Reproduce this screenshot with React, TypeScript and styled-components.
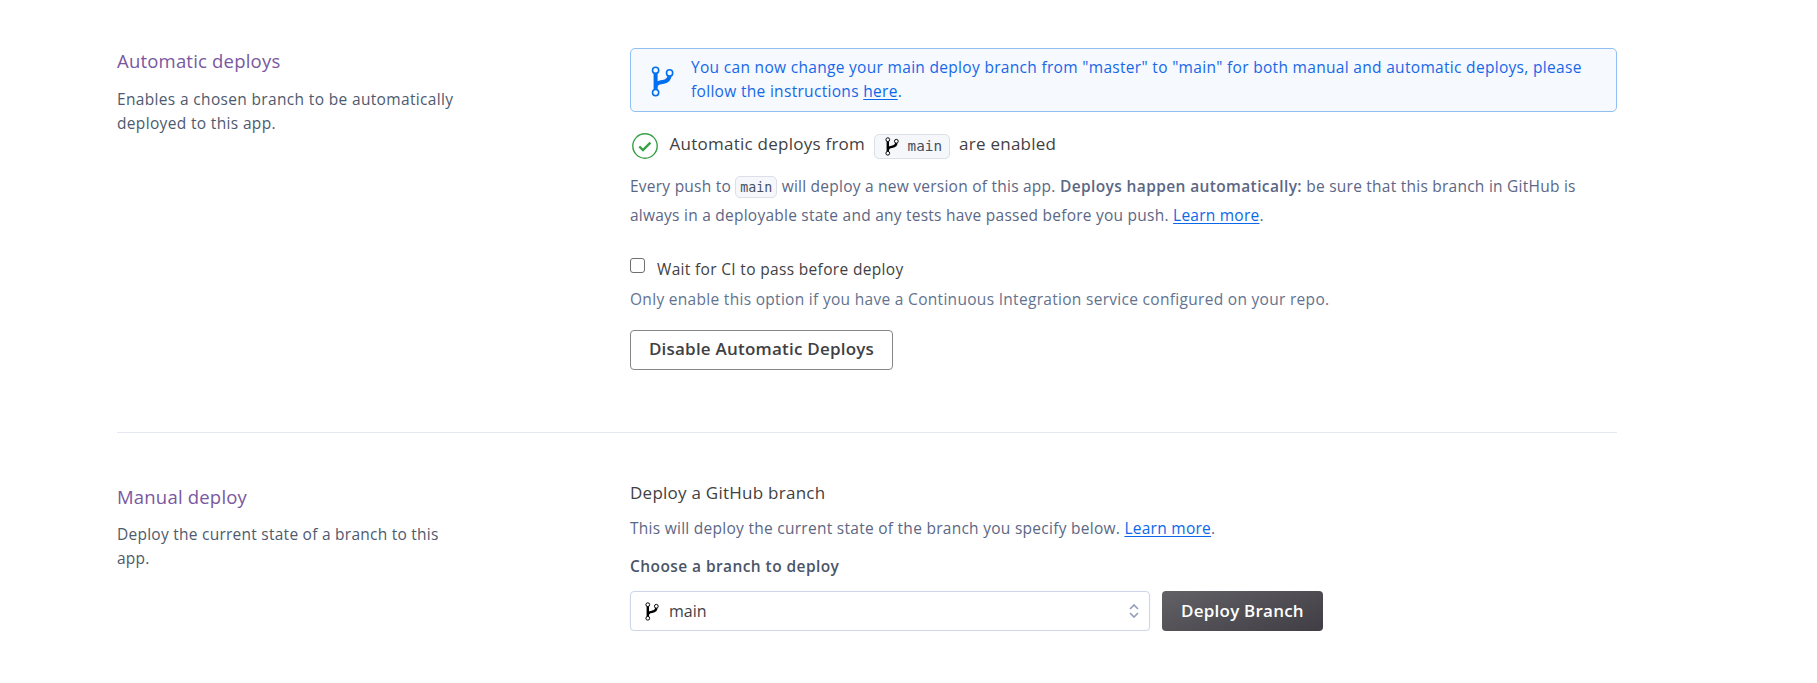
import React from "react";
import styled, { createGlobalStyle } from "styled-components";

const Global = createGlobalStyle`
  * { box-sizing: border-box; }
  body { margin: 0; background: #fff; font-family: "Open Sans", "Noto Sans", sans-serif; font-size: 15.5px; line-height: 24px; color: #3f3f44; }
  h2, h3, p { margin: 0; font-weight: 400; }
`;

const Page = styled.main`
  width: 1500px;
  margin-left: 117px;
  padding-top: 48px;
`;

const Section = styled.section<{ $gapTop?: number }>`
  display: grid;
  grid-template-columns: 513px 987px;
  padding-top: ${(p) => p.$gapTop ?? 0}px;
`;

const Divider = styled.hr`
  height: 1px;
  margin: 62px 0 0;
  border: 0;
  background: #e3e8f3;
`;

const Aside = styled.div<{ $compact?: boolean }>`
  width: 350px;
  margin-top: -1px;
  color: #4e5a6e;
  letter-spacing: ${(p) => (p.$compact ? 0.25 : 0.34)}px;

  h2 {
    margin-bottom: ${(p) => (p.$compact ? 11 : 12)}px;
  }
`;

const SectionTitle = styled.h2`
  font-size: 18.5px;
  line-height: 28px;
  letter-spacing: 0.2px;
  color: #79589f;
`;

const Content = styled.div``;

const Banner = styled.div`
  display: flex;
  align-items: center;
  height: 64px;
  padding: 0 20px 2px;
  border: 1px solid #8fbff3;
  border-radius: 5px;
  background: #f6f9fe;
  color: #1668e8;

  svg {
    margin-top: 4px;
    color: #0070f0;
  }
`;

const BannerText = styled.p`
  margin-left: 17px;
  letter-spacing: 0.31px;
  white-space: nowrap;
`;

const Link = styled.a`
  color: #0b68e8;
  text-decoration: underline;
  text-underline-offset: 2px;
`;

const Status = styled.h3`
  display: flex;
  align-items: center;
  height: 28px;
  margin-top: 20px;
  padding-left: 2px;
  font-size: 17px;
  letter-spacing: 0.25px;
  color: #3f3f44;
`;

const StatusText = styled.span<{ $trailing?: boolean }>`
  margin-left: ${(p) => (p.$trailing ? 9.5 : 11.5)}px;
  padding-bottom: 4px;
`;

const BranchChip = styled.code`
  display: inline-flex;
  align-items: center;
  width: 76px;
  height: 25px;
  margin-left: 8.5px;
  padding-left: 10px;
  border: 1px solid #dcdfe8;
  border-radius: 5px;
  background: #f5f7fb;
  font: 14.3px/22px "DejaVu Sans Mono", monospace;
  letter-spacing: 0;
  color: #474f5e;

  svg {
    color: #000;
  }
`;

const ChipLabel = styled.span`
  margin: 0 0 0 9px;
`;

const InlineCode = styled.code`
  display: inline-block;
  height: 22px;
  padding: 0 4px;
  border: 1px solid #dcdfe8;
  border-radius: 5px;
  background: #f5f7fb;
  font: 13.3px/21px "DejaVu Sans Mono", monospace;
  letter-spacing: 0;
  color: #474f5e;
`;

const Explain = styled.p`
  margin-top: 12px;
  line-height: 29px;
  letter-spacing: 0.24px;
  color: #5b6785;
  white-space: nowrap;

  b {
    font-weight: 600;
    letter-spacing: 0.38px;
  }
`;

const CheckRow = styled.label`
  display: flex;
  margin-top: 27px;
  letter-spacing: 0.33px;
  color: #3f3f44;
`;

const CheckBox = styled.input`
  appearance: none;
  width: 15px;
  height: 15px;
  margin: 1px 12px 0 0;
  border: 1px solid #6e6e73;
  border-radius: 3px;
`;

const Hint = styled.p`
  margin-top: 6px;
  letter-spacing: 0.3px;
  color: #62738f;
`;

const Button = styled.button<{ $primary?: boolean }>`
  height: 40px;
  padding: ${(p) => (p.$primary ? "0" : "0 0 2px")};
  width: ${(p) => (p.$primary ? 161 : 263)}px;
  border: ${(p) => (p.$primary ? "0" : "1px solid #85858a")};
  border-radius: 4px;
  background: ${(p) => (p.$primary ? "linear-gradient(160deg, #626166, #403e44)" : "#fff")};
  color: ${(p) => (p.$primary ? "#fff" : "#3f3f44")};
  font: 600 17px/24px "Open Sans", "Noto Sans", sans-serif;
  letter-spacing: 0.22px;
`;

const DisableButton = styled(Button)`
  display: block;
  margin-top: 19px;
`;

const FormTitle = styled.h3`
  margin-top: -3px;
  font-size: 17px;
  letter-spacing: 0.25px;
`;

const FormText = styled.p`
  margin-top: 11px;
  letter-spacing: 0.27px;
  color: #5b6785;
`;

const FieldLabel = styled.p`
  margin-top: 14px;
  font-weight: 600;
  letter-spacing: 0.42px;
  color: #4a5568;
`;

const Controls = styled.div`
  display: flex;
  gap: 12px;
  margin-top: 13px;
`;

const Select = styled.div`
  display: flex;
  align-items: center;
  width: 520px;
  height: 40px;
  padding: 0 10px 0 14px;
  border: 1px solid #cdd6e8;
  border-radius: 4px;
  box-shadow: 0 1px 2px rgba(120, 130, 160, 0.12);
  font-size: 16px;

  svg:first-child {
    color: #000;
  }
`;

const SelectValue = styled.span`
  flex: 1;
  margin-left: 10px;
`;

const ForkIcon = ({ w, h, bg }: { w: number; h: number; bg: string }) => (
  <svg width={w} height={h} viewBox="0 0 23 31" fill="none" stroke="currentColor">
    <path d="M4.6 6v19M4.6 22c0-5 3.4-5.4 7-6 4-.6 7-2 7-7" strokeWidth="4" />
    <circle cx="4.6" cy="4.3" r="3.1" fill={bg} strokeWidth="1.6" />
    <circle cx="18.6" cy="6.9" r="3.1" fill={bg} strokeWidth="1.6" />
    <circle cx="4.6" cy="26.6" r="3.1" fill={bg} strokeWidth="1.6" />
  </svg>
);

const CheckIcon = () => (
  <svg width="26" height="26" viewBox="0 0 26 26" fill="none" stroke="#38a044">
    <circle cx="13" cy="13" r="12.2" strokeWidth="1.4" />
    <path d="M7.3 13.5l3.7 3.6 7.4-7.4" strokeWidth="2.4" />
  </svg>
);

const SortIcon = () => (
  <svg width="10" height="14" viewBox="0 0 10 14" fill="none" stroke="#94a0b8" strokeWidth="1.7">
    <path d="M1 5l4-4 4 4M1 9l4 4 4-4" />
  </svg>
);

export default function App() {
  return (
    <>
      <Global />
      <Page>
        <Section>
          <Aside>
            <SectionTitle>Automatic deploys</SectionTitle>
            <p>Enables a chosen branch to be automatically deployed to this app.</p>
          </Aside>
          <Content>
            <Banner>
              <ForkIcon w={23} h={31} bg="#f6f9fe" />
              <BannerText>
                You can now change your main deploy branch from "master" to "main" for both manual and automatic deploys, please<br />
                follow the instructions <Link>here</Link>.
              </BannerText>
            </Banner>
            <Status>
              <CheckIcon />
              <StatusText>Automatic deploys from</StatusText>
              <BranchChip>
                <ForkIcon w={14} h={19} bg="#fff" />
                <ChipLabel>main</ChipLabel>
              </BranchChip>
              <StatusText $trailing>are enabled</StatusText>
            </Status>
            <Explain>
              Every push to <InlineCode>main</InlineCode> will deploy a new version of this app. <b>Deploys happen automatically:</b> be sure that this branch in GitHub is<br />
              always in a deployable state and any tests have passed before you push. <Link>Learn more</Link>.
            </Explain>
            <CheckRow>
              <CheckBox type="checkbox" />
              Wait for CI to pass before deploy
            </CheckRow>
            <Hint>Only enable this option if you have a Continuous Integration service configured on your repo.</Hint>
            <DisableButton>Disable Automatic Deploys</DisableButton>
          </Content>
        </Section>
        <Divider />
        <Section $gapTop={51}>
          <Aside $compact>
            <SectionTitle>Manual deploy</SectionTitle>
            <p>Deploy the current state of a branch to this<br />app.</p>
          </Aside>
          <Content>
            <FormTitle>Deploy a GitHub branch</FormTitle>
            <FormText>
              This will deploy the current state of the branch you specify below. <Link>Learn more</Link>.
            </FormText>
            <FieldLabel>Choose a branch to deploy</FieldLabel>
            <Controls>
              <Select>
                <ForkIcon w={14} h={19} bg="#fff" />
                <SelectValue>main</SelectValue>
                <SortIcon />
              </Select>
              <Button $primary>Deploy Branch</Button>
            </Controls>
          </Content>
        </Section>
      </Page>
    </>
  );
}
